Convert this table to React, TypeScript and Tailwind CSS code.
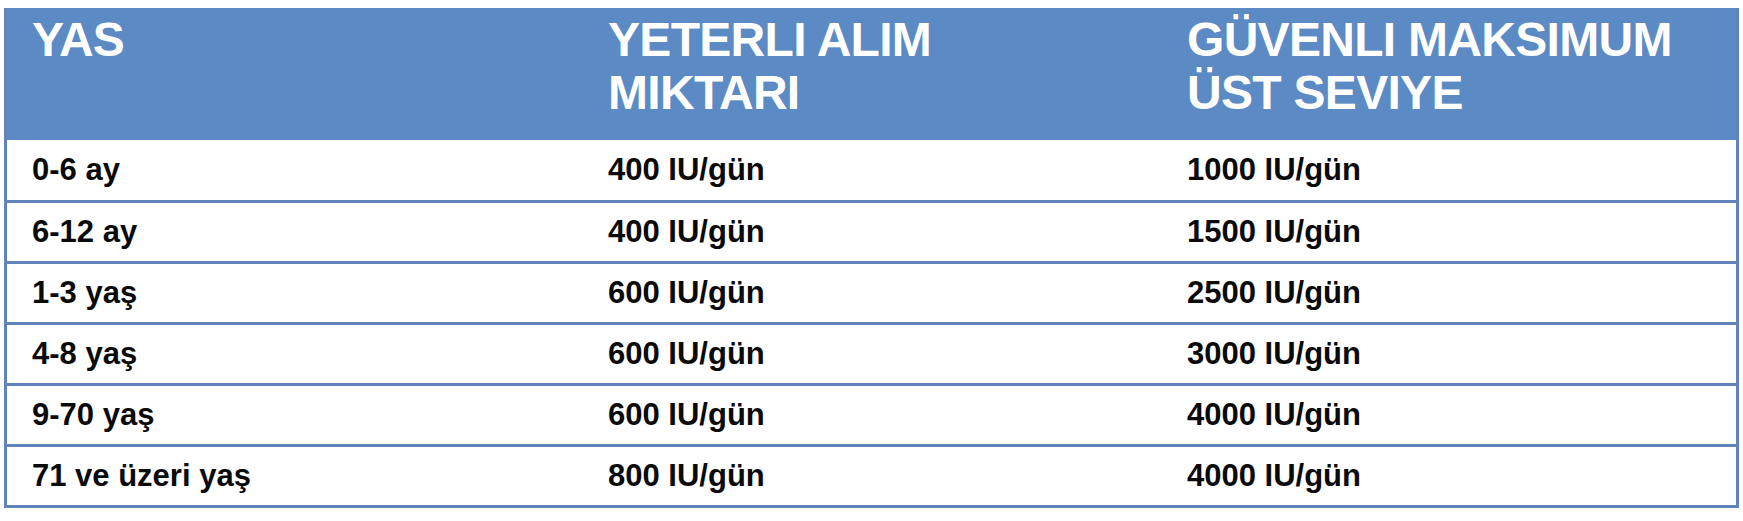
import React from "react";

const rows: [string, string, string][] = [
  ["0-6 ay", "400 IU/gün", "1000 IU/gün"],
  ["6-12 ay", "400 IU/gün", "1500 IU/gün"],
  ["1-3 yaş", "600 IU/gün", "2500 IU/gün"],
  ["4-8 yaş", "600 IU/gün", "3000 IU/gün"],
  ["9-70 yaş", "600 IU/gün", "4000 IU/gün"],
  ["71 ve üzeri yaş", "800 IU/gün", "4000 IU/gün"],
];

export default function App() {
  return (
    <div
      className="w-[1743px] h-[521px] bg-white pt-[8px] pl-[4px]"
      style={{ fontFamily: '"Liberation Sans", Arial, sans-serif' }}
    >
      <div className="w-[1735px] border-x-[3px] border-b-[3px] border-[#6083bc]">
        <div className="grid grid-cols-[576px_579px_1fr] h-[132px] bg-[#5c8ac4] pt-[5px] text-white font-bold text-[48px] leading-[53px] tracking-[-0.7px]">
          <div className="pl-[25px]">YAS</div>
          <div className="pl-[25px]">
            YETERLI ALIM
            <br />
            MIKTARI
          </div>
          <div className="pl-[25px]">
            GÜVENLI MAKSIMUM
            <br />
            ÜST SEVIYE
          </div>
        </div>
        {rows.map((r, i) => (
          <div
            key={i}
            className={
              i === 0
                ? "grid grid-cols-[576px_579px_1fr] items-center h-[60px] text-[31px] font-bold text-[#0a0a0a]"
                : "grid grid-cols-[576px_579px_1fr] items-center h-[61px] border-t-[3px] border-[#6083bc] text-[31px] font-bold text-[#0a0a0a]"
            }
          >
            <div className="pl-[25px]">{r[0]}</div>
            <div className="pl-[25px]">{r[1]}</div>
            <div className="pl-[25px]">{r[2]}</div>
          </div>
        ))}
      </div>
    </div>
  );
}
